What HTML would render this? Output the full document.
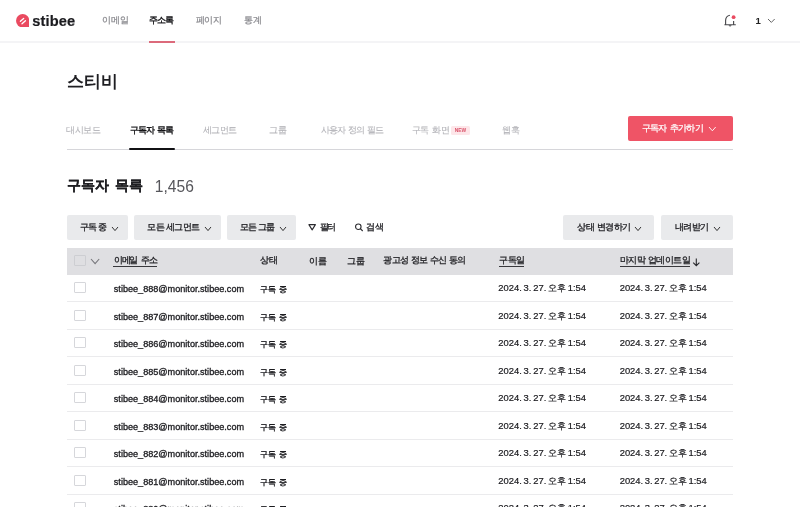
<!DOCTYPE html>
<html lang="ko"><head><meta charset="utf-8">
<style>
*{box-sizing:border-box;margin:0;padding:0}
html,body{width:800px;height:507px;overflow:hidden;background:#fff}
body{font-family:"Liberation Sans",sans-serif;color:#222;position:relative}
.a{position:absolute;white-space:nowrap;line-height:1.2}
body{will-change:transform}
.u{text-decoration:underline}
</style></head><body>
<div class="a" style="left:0;top:0;width:800px;height:41.5px;background:#fff"></div>
<div class="a" style="left:0;top:41.2px;width:800px;height:1.4px;background:#f4f4f6"></div>
<svg class="a" style="left:16px;top:13.7px" width="13.4" height="13.4" viewBox="0 0 21 21"><path d="M10.5 0A10.5 10.5 0 1 0 10.5 21H21V10.5A10.5 10.5 0 0 0 10.5 0Z" fill="#ea4a60"/><path d="M6.9 11.3L12 7M9.4 15.3L14.8 10.4" stroke="#fff" stroke-width="2.1" stroke-linecap="round"/></svg>
<div class="a" style="left:149.1px;top:40.9px;width:25.9px;height:2px;background:#dc6a7b"></div>
<svg class="a" style="left:723px;top:14px" width="15" height="15" viewBox="0 0 15 15"><path d="M1.4 10.7H12.8M2.6 10.7V6.5C2.6 3.6 4.2 1.7 6.9 1.2M10.6 7V10.7" stroke="#4a4a4e" stroke-width="1.15" fill="none"/><path d="M5.5 11.2Q7.1 13.6 8.7 11.2Z" fill="#4a4a4e"/><circle cx="10.6" cy="3.2" r="1.9" fill="#ea4a60"/></svg>
<svg class="a" style="left:766.75px;top:18.45px" width="8.7" height="5.4" viewBox="-1 -1 8.7 5.4"><path d="M0 0L3.35 3.4L6.7 0" stroke="#555" stroke-width="0.9" fill="none"/></svg>
<div class="a" style="left:67px;top:148.7px;width:666px;height:1px;background:#d6d6da"></div>
<div class="a" style="left:128.8px;top:148.3px;width:45.8px;height:1.8px;background:#111114;border-radius:1px"></div>
<div class="a" style="left:451px;top:126px;width:19px;height:9px;background:#fde6e9;border-radius:1.5px"></div>
<div class="a" style="left:451px;top:126.6px;width:19px;font-size:4.9px;line-height:8px;font-weight:bold;color:#d9536a;text-align:center">NEW</div>
<div class="a" style="left:628.2px;top:116px;width:104.5px;height:25.2px;background:#ef5466;border-radius:2px"></div>
<svg class="a" style="left:707.95px;top:126.45px" width="8.7" height="5.8" viewBox="-1 -1 8.7 5.8"><path d="M0 0L3.35 3.8L6.7 0" stroke="#fff" stroke-width="0.9" fill="none"/></svg>
<div class="a" style="left:67.2px;top:214.5px;width:60.8px;height:25.9px;background:#e9eaec;border-radius:2px"></div>
<svg class="a" style="left:110.80px;top:225.50px" width="8" height="5.6" viewBox="-1 -1 8 5.6"><path d="M0 0L3.0 3.6L6 0" stroke="#333" stroke-width="1" fill="none"/></svg>
<div class="a" style="left:134.3px;top:214.5px;width:86.7px;height:25.9px;background:#e9eaec;border-radius:2px"></div>
<svg class="a" style="left:203.50px;top:225.50px" width="8" height="5.6" viewBox="-1 -1 8 5.6"><path d="M0 0L3.0 3.6L6 0" stroke="#333" stroke-width="1" fill="none"/></svg>
<div class="a" style="left:226.8px;top:214.5px;width:69.2px;height:25.9px;background:#e9eaec;border-radius:2px"></div>
<svg class="a" style="left:278.50px;top:225.50px" width="8" height="5.6" viewBox="-1 -1 8 5.6"><path d="M0 0L3.0 3.6L6 0" stroke="#333" stroke-width="1" fill="none"/></svg>
<div class="a" style="left:563.3px;top:214.5px;width:91.0px;height:25.9px;background:#e9eaec;border-radius:2px"></div>
<svg class="a" style="left:634.10px;top:225.50px" width="8" height="5.6" viewBox="-1 -1 8 5.6"><path d="M0 0L3.0 3.6L6 0" stroke="#333" stroke-width="1" fill="none"/></svg>
<div class="a" style="left:660.7px;top:214.5px;width:72.3px;height:25.9px;background:#e9eaec;border-radius:2px"></div>
<svg class="a" style="left:712.50px;top:225.50px" width="8" height="5.6" viewBox="-1 -1 8 5.6"><path d="M0 0L3.0 3.6L6 0" stroke="#333" stroke-width="1" fill="none"/></svg>
<svg class="a" style="left:307px;top:223px" width="10" height="9" viewBox="0 0 10 9"><path d="M1.9 1.6H8.4L5.15 6.9Z" stroke="#2a2a2e" stroke-width="1.1" fill="none" stroke-linejoin="round"/></svg>
<svg class="a" style="left:354px;top:222px" width="10" height="10" viewBox="0 0 10 10"><circle cx="4.3" cy="4.7" r="2.75" stroke="#2a2a2e" stroke-width="1.1" fill="none"/><path d="M6.3 6.7L8.7 9" stroke="#2a2a2e" stroke-width="1.1"/></svg>
<div class="a" style="left:67px;top:247.6px;width:666px;height:27.0px;background:#dfdfe2"></div>
<div class="a" style="left:74.4px;top:254.9px;width:11.3px;height:10.7px;border:1px solid #cdced2;border-radius:1px"></div>
<svg class="a" style="left:90.45px;top:257.95px" width="10.2" height="6.6" viewBox="-1 -1 10.2 6.6"><path d="M0 0L4.1 4.6L8.2 0" stroke="#76767b" stroke-width="1.1" fill="none"/></svg>
<div class="a" style="left:113.4px;top:265.5px;width:44.10px;height:1.1px;background:#38383c"></div>
<div class="a" style="left:498.75px;top:265.5px;width:25.65px;height:1.1px;background:#38383c"></div>
<div class="a" style="left:619.5px;top:265.5px;width:70.10px;height:1.1px;background:#38383c"></div>
<svg class="a" style="left:692px;top:257.5px" width="9" height="9" viewBox="0 0 9 9"><path d="M4.3 0.6V7.6M1.2 4.6L4.3 7.7L7.4 4.6" stroke="#2a2a2e" stroke-width="1.1" fill="none"/></svg>
<div class="a" style="left:67px;top:301.20px;width:666px;height:1px;background:#ebebed"></div>
<div class="a" style="left:74.4px;top:282.00px;width:11.3px;height:11px;border:1px solid #d6d7db;border-radius:1px;background:#fff"></div>
<div class="a" style="left:67px;top:328.70px;width:666px;height:1px;background:#ebebed"></div>
<div class="a" style="left:74.4px;top:309.50px;width:11.3px;height:11px;border:1px solid #d6d7db;border-radius:1px;background:#fff"></div>
<div class="a" style="left:67px;top:356.20px;width:666px;height:1px;background:#ebebed"></div>
<div class="a" style="left:74.4px;top:337.00px;width:11.3px;height:11px;border:1px solid #d6d7db;border-radius:1px;background:#fff"></div>
<div class="a" style="left:67px;top:383.70px;width:666px;height:1px;background:#ebebed"></div>
<div class="a" style="left:74.4px;top:364.50px;width:11.3px;height:11px;border:1px solid #d6d7db;border-radius:1px;background:#fff"></div>
<div class="a" style="left:67px;top:411.20px;width:666px;height:1px;background:#ebebed"></div>
<div class="a" style="left:74.4px;top:392.00px;width:11.3px;height:11px;border:1px solid #d6d7db;border-radius:1px;background:#fff"></div>
<div class="a" style="left:67px;top:438.70px;width:666px;height:1px;background:#ebebed"></div>
<div class="a" style="left:74.4px;top:419.50px;width:11.3px;height:11px;border:1px solid #d6d7db;border-radius:1px;background:#fff"></div>
<div class="a" style="left:67px;top:466.20px;width:666px;height:1px;background:#ebebed"></div>
<div class="a" style="left:74.4px;top:447.00px;width:11.3px;height:11px;border:1px solid #d6d7db;border-radius:1px;background:#fff"></div>
<div class="a" style="left:67px;top:493.70px;width:666px;height:1px;background:#ebebed"></div>
<div class="a" style="left:74.4px;top:474.50px;width:11.3px;height:11px;border:1px solid #d6d7db;border-radius:1px;background:#fff"></div>
<div class="a" style="left:67px;top:521.20px;width:666px;height:1px;background:#ebebed"></div>
<div class="a" style="left:74.4px;top:502.00px;width:11.3px;height:11px;border:1px solid #d6d7db;border-radius:1px;background:#fff"></div>
<div class="a" id="stibee" style="left:32.27px;top:12.76px;font-size:14.60px;color:#1b1b1f;letter-spacing:0.12px;font-weight:bold;-webkit-text-stroke-width:0.2px">stibee</div>
<div class="a" id="nav1" style="left:102.47px;top:15.35px;font-size:8.70px;color:#8b8b90;letter-spacing:-0.46px;-webkit-text-stroke-width:0.25px">이메일</div>
<div class="a" id="nav2" style="left:149.22px;top:15.14px;font-size:8.70px;color:#111114;letter-spacing:-0.89px;-webkit-text-stroke-width:0.35px">주소록</div>
<div class="a" id="nav3" style="left:195.78px;top:14.90px;font-size:8.70px;color:#8b8b90;letter-spacing:-0.35px;-webkit-text-stroke-width:0.25px">페이지</div>
<div class="a" id="nav4" style="left:243.55px;top:15.20px;font-size:8.70px;color:#8b8b90;letter-spacing:0.00px;-webkit-text-stroke-width:0.25px">통계</div>
<div class="a" id="one" style="left:755.45px;top:15.41px;font-size:9.60px;color:#222;letter-spacing:0.00px;font-weight:bold">1</div>
<div class="a" id="title" style="left:66.78px;top:71.16px;font-size:17.20px;color:#1e1e22;letter-spacing:0.12px;font-weight:bold">스티비</div>
<div class="a" id="tab1" style="left:66.38px;top:125.20px;font-size:8.60px;color:#b3b3b8;letter-spacing:-0.60px;-webkit-text-stroke-width:0.1px">대시보드</div>
<div class="a" id="tab2" style="left:129.77px;top:125.26px;font-size:8.60px;color:#111114;letter-spacing:-0.89px;-webkit-text-stroke-width:0.35px;word-spacing:1.00px">구독자 목록</div>
<div class="a" id="tab3" style="left:203.00px;top:125.20px;font-size:8.60px;color:#b3b3b8;letter-spacing:-0.67px;-webkit-text-stroke-width:0.1px">세그먼트</div>
<div class="a" id="tab4" style="left:269.41px;top:125.20px;font-size:8.70px;color:#b3b3b8;letter-spacing:0.00px;-webkit-text-stroke-width:0.1px">그룹</div>
<div class="a" id="tab5" style="left:320.77px;top:125.05px;font-size:8.60px;color:#b3b3b8;letter-spacing:-0.82px;-webkit-text-stroke-width:0.1px;word-spacing:1.00px">사용자 정의 필드</div>
<div class="a" id="tab6" style="left:411.95px;top:125.05px;font-size:8.60px;color:#b3b3b8;letter-spacing:-0.45px;-webkit-text-stroke-width:0.1px;word-spacing:1.00px">구독 화면</div>
<div class="a" id="tab7" style="left:501.60px;top:125.35px;font-size:8.70px;color:#b3b3b8;letter-spacing:0.00px;-webkit-text-stroke-width:0.1px">웹훅</div>
<div class="a" id="addbtn" style="left:641.87px;top:123.46px;font-size:9.00px;color:#fff;letter-spacing:-0.68px;-webkit-text-stroke-width:0.25px;word-spacing:1.00px">구독자 추가하기</div>
<div class="a" id="sub" style="left:66.92px;top:176.93px;font-size:14.40px;color:#1e1e22;letter-spacing:0.03px;font-weight:bold;-webkit-text-stroke-width:0.2px;word-spacing:1.50px">구독자 목록</div>
<div class="a" id="count" style="left:154.85px;top:177.79px;font-size:15.60px;color:#56565b;letter-spacing:0.00px">1,456</div>
<div class="a" id="b1t" style="left:79.76px;top:222.14px;font-size:8.50px;color:#222226;letter-spacing:-0.88px;-webkit-text-stroke-width:0.3px;word-spacing:1.00px">구독 중</div>
<div class="a" id="b2t" style="left:147.35px;top:222.44px;font-size:8.50px;color:#222226;letter-spacing:-0.83px;-webkit-text-stroke-width:0.3px;word-spacing:1.00px">모든 세그먼트</div>
<div class="a" id="b3t" style="left:239.77px;top:222.44px;font-size:8.50px;color:#222226;letter-spacing:-1.04px;-webkit-text-stroke-width:0.3px;word-spacing:1.00px">모든 그룹</div>
<div class="a" id="filt" style="left:319.73px;top:222.23px;font-size:8.70px;color:#222226;letter-spacing:-1.25px;-webkit-text-stroke-width:0.3px">필터</div>
<div class="a" id="srch" style="left:365.86px;top:222.23px;font-size:8.70px;color:#222226;letter-spacing:-0.25px;-webkit-text-stroke-width:0.3px">검색</div>
<div class="a" id="b4t" style="left:577.48px;top:221.99px;font-size:8.50px;color:#222226;letter-spacing:-0.60px;-webkit-text-stroke-width:0.3px;word-spacing:1.00px">상태 변경하기</div>
<div class="a" id="b5t" style="left:674.77px;top:222.41px;font-size:8.50px;color:#222226;letter-spacing:-0.49px;-webkit-text-stroke-width:0.3px">내려받기</div>
<div class="a" id="h_email" style="left:113.60px;top:255.15px;font-size:8.60px;color:#222226;letter-spacing:-1.09px;-webkit-text-stroke-width:0.3px;word-spacing:2.00px">이메일 주소</div>
<div class="a" id="h_state" style="left:260.22px;top:255.33px;font-size:8.70px;color:#222226;letter-spacing:0.00px;-webkit-text-stroke-width:0.3px">상태</div>
<div class="a" id="h_name" style="left:309.38px;top:255.78px;font-size:8.70px;color:#222226;letter-spacing:0.00px;-webkit-text-stroke-width:0.3px">이름</div>
<div class="a" id="h_group" style="left:346.87px;top:255.93px;font-size:8.70px;color:#222226;letter-spacing:0.00px;-webkit-text-stroke-width:0.3px">그룹</div>
<div class="a" id="h_ad" style="left:383.26px;top:255.39px;font-size:8.60px;color:#222226;letter-spacing:-0.75px;-webkit-text-stroke-width:0.3px;word-spacing:1.00px">광고성 정보 수신 동의</div>
<div class="a" id="h_sub" style="left:498.52px;top:255.15px;font-size:8.60px;color:#222226;letter-spacing:-0.01px;-webkit-text-stroke-width:0.3px">구독일</div>
<div class="a" id="h_last" style="left:619.81px;top:255.09px;font-size:8.60px;color:#222226;letter-spacing:-0.51px;-webkit-text-stroke-width:0.3px;word-spacing:0.80px">마지막 업데이트일</div>
<div class="a" id="r_email" style="left:113.81px;top:284.04px;font-size:9.12px;color:#1a1a1e;letter-spacing:0.00px;-webkit-text-stroke-width:0.3px">stibee_888@monitor.stibee.com</div>
<div class="a" id="r_state" style="left:260.30px;top:284.05px;font-size:8.40px;color:#1a1a1e;letter-spacing:-0.30px;-webkit-text-stroke-width:0.35px;word-spacing:1.00px">구독 중</div>
<div class="a" id="r_date" style="left:498.30px;top:282.05px;font-size:9.40px;color:#1a1a1e;letter-spacing:0.04px;-webkit-text-stroke-width:0.2px;word-spacing:-1.00px">2024. 3. 27. 오후 1:54</div>
<div class="a" id="r_date2" style="left:619.69px;top:282.05px;font-size:9.40px;color:#1a1a1e;letter-spacing:-0.00px;-webkit-text-stroke-width:0.2px;word-spacing:-1.00px">2024. 3. 27. 오후 1:54</div>
<div class="a" id="r_email1" style="left:113.81px;top:311.54px;font-size:9.12px;color:#1a1a1e;letter-spacing:0.00px;-webkit-text-stroke-width:0.3px">stibee_887@monitor.stibee.com</div>
<div class="a" id="r_state1" style="left:260.30px;top:311.55px;font-size:8.40px;color:#1a1a1e;letter-spacing:-0.30px;-webkit-text-stroke-width:0.35px;word-spacing:1.00px">구독 중</div>
<div class="a" id="r_date1" style="left:498.30px;top:309.55px;font-size:9.40px;color:#1a1a1e;letter-spacing:0.04px;-webkit-text-stroke-width:0.2px;word-spacing:-1.00px">2024. 3. 27. 오후 1:54</div>
<div class="a" id="r_date21" style="left:619.69px;top:309.55px;font-size:9.40px;color:#1a1a1e;letter-spacing:-0.00px;-webkit-text-stroke-width:0.2px;word-spacing:-1.00px">2024. 3. 27. 오후 1:54</div>
<div class="a" id="r_email2" style="left:113.81px;top:339.04px;font-size:9.12px;color:#1a1a1e;letter-spacing:0.00px;-webkit-text-stroke-width:0.3px">stibee_886@monitor.stibee.com</div>
<div class="a" id="r_state2" style="left:260.30px;top:339.05px;font-size:8.40px;color:#1a1a1e;letter-spacing:-0.30px;-webkit-text-stroke-width:0.35px;word-spacing:1.00px">구독 중</div>
<div class="a" id="r_date2" style="left:498.30px;top:337.05px;font-size:9.40px;color:#1a1a1e;letter-spacing:0.04px;-webkit-text-stroke-width:0.2px;word-spacing:-1.00px">2024. 3. 27. 오후 1:54</div>
<div class="a" id="r_date22" style="left:619.69px;top:337.05px;font-size:9.40px;color:#1a1a1e;letter-spacing:-0.00px;-webkit-text-stroke-width:0.2px;word-spacing:-1.00px">2024. 3. 27. 오후 1:54</div>
<div class="a" id="r_email3" style="left:113.81px;top:366.54px;font-size:9.12px;color:#1a1a1e;letter-spacing:0.00px;-webkit-text-stroke-width:0.3px">stibee_885@monitor.stibee.com</div>
<div class="a" id="r_state3" style="left:260.30px;top:366.55px;font-size:8.40px;color:#1a1a1e;letter-spacing:-0.30px;-webkit-text-stroke-width:0.35px;word-spacing:1.00px">구독 중</div>
<div class="a" id="r_date3" style="left:498.30px;top:364.55px;font-size:9.40px;color:#1a1a1e;letter-spacing:0.04px;-webkit-text-stroke-width:0.2px;word-spacing:-1.00px">2024. 3. 27. 오후 1:54</div>
<div class="a" id="r_date23" style="left:619.69px;top:364.55px;font-size:9.40px;color:#1a1a1e;letter-spacing:-0.00px;-webkit-text-stroke-width:0.2px;word-spacing:-1.00px">2024. 3. 27. 오후 1:54</div>
<div class="a" id="r_email4" style="left:113.81px;top:394.04px;font-size:9.12px;color:#1a1a1e;letter-spacing:0.00px;-webkit-text-stroke-width:0.3px">stibee_884@monitor.stibee.com</div>
<div class="a" id="r_state4" style="left:260.30px;top:394.05px;font-size:8.40px;color:#1a1a1e;letter-spacing:-0.30px;-webkit-text-stroke-width:0.35px;word-spacing:1.00px">구독 중</div>
<div class="a" id="r_date4" style="left:498.30px;top:392.05px;font-size:9.40px;color:#1a1a1e;letter-spacing:0.04px;-webkit-text-stroke-width:0.2px;word-spacing:-1.00px">2024. 3. 27. 오후 1:54</div>
<div class="a" id="r_date24" style="left:619.69px;top:392.05px;font-size:9.40px;color:#1a1a1e;letter-spacing:-0.00px;-webkit-text-stroke-width:0.2px;word-spacing:-1.00px">2024. 3. 27. 오후 1:54</div>
<div class="a" id="r_email5" style="left:113.81px;top:421.54px;font-size:9.12px;color:#1a1a1e;letter-spacing:0.00px;-webkit-text-stroke-width:0.3px">stibee_883@monitor.stibee.com</div>
<div class="a" id="r_state5" style="left:260.30px;top:421.55px;font-size:8.40px;color:#1a1a1e;letter-spacing:-0.30px;-webkit-text-stroke-width:0.35px;word-spacing:1.00px">구독 중</div>
<div class="a" id="r_date5" style="left:498.30px;top:419.55px;font-size:9.40px;color:#1a1a1e;letter-spacing:0.04px;-webkit-text-stroke-width:0.2px;word-spacing:-1.00px">2024. 3. 27. 오후 1:54</div>
<div class="a" id="r_date25" style="left:619.69px;top:419.55px;font-size:9.40px;color:#1a1a1e;letter-spacing:-0.00px;-webkit-text-stroke-width:0.2px;word-spacing:-1.00px">2024. 3. 27. 오후 1:54</div>
<div class="a" id="r_email6" style="left:113.81px;top:449.04px;font-size:9.12px;color:#1a1a1e;letter-spacing:0.00px;-webkit-text-stroke-width:0.3px">stibee_882@monitor.stibee.com</div>
<div class="a" id="r_state6" style="left:260.30px;top:449.05px;font-size:8.40px;color:#1a1a1e;letter-spacing:-0.30px;-webkit-text-stroke-width:0.35px;word-spacing:1.00px">구독 중</div>
<div class="a" id="r_date6" style="left:498.30px;top:447.05px;font-size:9.40px;color:#1a1a1e;letter-spacing:0.04px;-webkit-text-stroke-width:0.2px;word-spacing:-1.00px">2024. 3. 27. 오후 1:54</div>
<div class="a" id="r_date26" style="left:619.69px;top:447.05px;font-size:9.40px;color:#1a1a1e;letter-spacing:-0.00px;-webkit-text-stroke-width:0.2px;word-spacing:-1.00px">2024. 3. 27. 오후 1:54</div>
<div class="a" id="r_email7" style="left:113.81px;top:476.54px;font-size:9.12px;color:#1a1a1e;letter-spacing:0.00px;-webkit-text-stroke-width:0.3px">stibee_881@monitor.stibee.com</div>
<div class="a" id="r_state7" style="left:260.30px;top:476.55px;font-size:8.40px;color:#1a1a1e;letter-spacing:-0.30px;-webkit-text-stroke-width:0.35px;word-spacing:1.00px">구독 중</div>
<div class="a" id="r_date7" style="left:498.30px;top:474.55px;font-size:9.40px;color:#1a1a1e;letter-spacing:0.04px;-webkit-text-stroke-width:0.2px;word-spacing:-1.00px">2024. 3. 27. 오후 1:54</div>
<div class="a" id="r_date27" style="left:619.69px;top:474.55px;font-size:9.40px;color:#1a1a1e;letter-spacing:-0.00px;-webkit-text-stroke-width:0.2px;word-spacing:-1.00px">2024. 3. 27. 오후 1:54</div>
<div class="a" id="r_email8" style="left:113.81px;top:504.04px;font-size:9.12px;color:#1a1a1e;letter-spacing:0.00px;-webkit-text-stroke-width:0.3px">stibee_880@monitor.stibee.com</div>
<div class="a" id="r_state8" style="left:260.30px;top:504.05px;font-size:8.40px;color:#1a1a1e;letter-spacing:-0.30px;-webkit-text-stroke-width:0.35px;word-spacing:1.00px">구독 중</div>
<div class="a" id="r_date8" style="left:498.30px;top:502.05px;font-size:9.40px;color:#1a1a1e;letter-spacing:0.04px;-webkit-text-stroke-width:0.2px;word-spacing:-1.00px">2024. 3. 27. 오후 1:54</div>
<div class="a" id="r_date28" style="left:619.69px;top:502.05px;font-size:9.40px;color:#1a1a1e;letter-spacing:-0.00px;-webkit-text-stroke-width:0.2px;word-spacing:-1.00px">2024. 3. 27. 오후 1:54</div>
</body></html>
